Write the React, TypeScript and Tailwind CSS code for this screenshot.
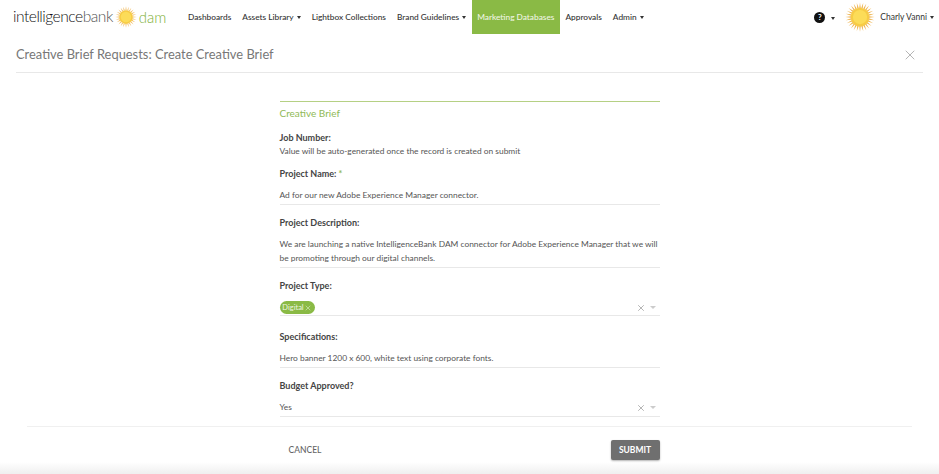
import { X } from 'lucide-react';

const NAV = [
  { label: 'Dashboards', caret: false },
  { label: 'Assets Library', caret: true },
  { label: 'Lightbox Collections', caret: false },
  { label: 'Brand Guidelines', caret: true },
  { label: 'Marketing Databases', caret: false, active: true },
  { label: 'Approvals', caret: false },
  { label: 'Admin', caret: true },
];

function Caret() {
  return <span className="ml-[3px] inline-block h-0 w-0 border-x-[2.5px] border-t-[3px] border-x-transparent border-t-[#333]" />;
}

function Sun({ size, rays }: { size: number; rays: number }) {
  return (
    <svg width={size} height={size} viewBox="0 0 40 40" className="shrink-0">
      {Array.from({ length: rays }).map((_, i) => (
        <path key={i} d="M19 8 L20 0.5 L21 8 Z" fill="#efb552" transform={`rotate(${(i * 360) / rays} 20 20)`} />
      ))}
      <circle cx="20" cy="20" r="12.5" fill="#f7cb45" />
      <circle cx="20" cy="20" r="9.5" fill="#fcdc58" />
    </svg>
  );
}

function Label({ children }: { children: React.ReactNode }) {
  return <div className="text-[9px] leading-[13px] font-bold text-[#444]">{children}</div>;
}

function ClearCaret() {
  return (
    <div className="flex items-center gap-[4px]">
      <X size={10} strokeWidth={1.5} className="text-[#888]" />
      <span className="h-0 w-0 border-x-[3px] border-t-[3px] border-x-transparent border-t-[#ccc]" />
    </div>
  );
}

export default function App() {
  return (
    <div className="relative flex h-[474px] w-[939px] flex-col overflow-hidden bg-white font-['Lato','Open_Sans',sans-serif] text-[#555]">
      {/* Top nav */}
      <header className="flex h-[34px] shrink-0 items-stretch">
        <div className="ml-[13px] flex w-[169.5px] shrink-0 items-center">
          <span className="text-[15.6px] leading-none font-light tracking-[-0.5px] text-[#111]">intelligence</span>
          <span className="text-[15.6px] leading-none font-light tracking-[-0.5px] text-[#555]">bank</span>
          <span className="ml-[2px]"><Sun size={22} rays={24} /></span>
          <span className="ml-[2px] text-[15px] leading-none font-light text-[#7fb13a]">dam</span>
        </div>
        <nav className="flex items-stretch text-[8.3px] font-medium text-[#333]">
          {NAV.map((item) => (
            <div
              key={item.label}
              className={item.active ? 'flex items-center bg-[#8aba45] px-[5.5px] text-[#eef5e2]' : 'flex items-center px-[5.5px]'}
            >
              {item.label}
              {item.caret && <Caret />}
            </div>
          ))}
        </nav>
        <div className="ml-auto mr-[5px] flex items-center text-[8.5px] text-[#333]">
          <span className="flex h-[11px] w-[11px] items-center justify-center rounded-full bg-[#111] text-[8px] font-bold text-white">?</span>
          <span className="ml-[3px]"><Caret /></span>
          <span className="ml-[10px] mr-[5px]"><Sun size={30} rays={28} /></span>
          Charly Vanni
          <Caret />
        </div>
      </header>

      {/* Page title */}
      <div className="mx-[16px] flex h-[39px] shrink-0 items-center justify-between border-b border-[#e8e8e8] pt-[3px] pr-[5px]">
        <h1 className="text-[12.9px] text-[#777]">Creative Brief Requests: Create Creative Brief</h1>
        <X size={16} strokeWidth={1.1} className="text-[#999]" />
      </div>

      {/* Form */}
      <main className="mx-auto mt-[28px] w-[380px] shrink-0 text-[8.4px] text-[#555]">
        <div className="h-px bg-[#b5d084]" />
        <div className="pt-[5px] text-[10px] leading-[13px] text-[#8fb956]">Creative Brief</div>

        <div className="mt-[11px]">
          <Label>Job Number:</Label>
          <div className="mt-[1px] leading-[13px]">Value will be auto-generated once the record is created on submit</div>
        </div>

        <div className="mt-[9px]">
          <Label>Project Name: <span className="text-[#8fb956]">*</span></Label>
          <div className="mt-[9px] border-b border-[#e8e8e8] pb-[2px] leading-[13px]">Ad for our new Adobe Experience Manager connector.</div>
        </div>

        <div className="mt-[11px]">
          <Label>Project Description:</Label>
          <div className="mt-[9px] border-b border-[#e8e8e8] pb-[2px] leading-[13.5px]">
            We are launching a native IntelligenceBank DAM connector for Adobe Experience Manager that we will be promoting through our digital channels.
          </div>
        </div>

        <div className="mt-[11px]">
          <Label>Project Type:</Label>
          <div className="mt-[9px] flex items-center justify-between border-b border-[#e8e8e8] pb-[1px] pr-[4px]">
            <span className="flex h-[13px] w-[35px] items-center justify-center rounded-full bg-[#8aba45] text-[7.5px] text-[#eef5e2]">
              Digital<X size={8} strokeWidth={1.5} />
            </span>
            <ClearCaret />
          </div>
        </div>

        <div className="mt-[14px]">
          <Label>Specifications:</Label>
          <div className="mt-[9px] border-b border-[#e8e8e8] pb-[2px] leading-[13px]">Hero banner 1200 x 600, white text using corporate fonts.</div>
        </div>

        <div className="mt-[11px]">
          <Label>Budget Approved?</Label>
          <div className="mt-[9px] flex items-center justify-between border-b border-[#e8e8e8] pb-[2px] pr-[4px] leading-[13px]">
            Yes
            <ClearCaret />
          </div>
        </div>
      </main>

      {/* Footer actions */}
      <div className="mx-[27px] mt-[9px] shrink-0 border-t border-[#f0f0f0]">
        <div className="mx-auto mt-[13px] flex w-[380px] items-center justify-between">
          <span className="ml-[9px] text-[8.5px] font-medium text-[#666]">CANCEL</span>
          <button className="h-[20px] w-[49px] rounded-[2px] bg-[#6f6f6f] text-[8.5px] font-bold text-white shadow-[0_1px_2px_rgba(0,0,0,0.3)]">SUBMIT</button>
        </div>
      </div>
      <div className="absolute inset-x-0 bottom-0 h-[12px] bg-gradient-to-b from-transparent to-[#efefef]" />
    </div>
  );
}
